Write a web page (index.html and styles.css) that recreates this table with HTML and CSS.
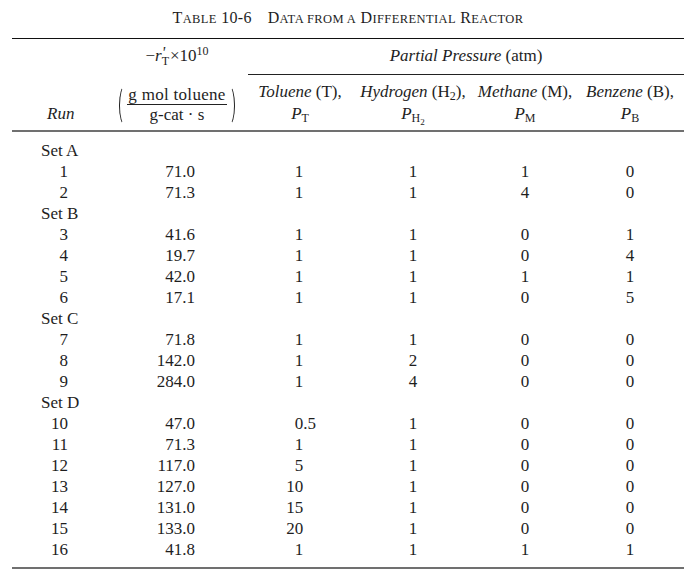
FILE: index.html
```html
<!DOCTYPE html>
<html>
<head>
<meta charset="utf-8">
<link rel="stylesheet" href="styles.css">
</head>
<body>
<div class="page">
  <h1 class="title"><span>T<span class="sc">able</span> 10-6</span><span class="title-main">D<span class="sc">ata from a</span> D<span class="sc">ifferential</span> R<span class="sc">eactor</span></span></h1>
  <table class="data">
    <colgroup>
      <col class="c-run"><col class="c-rate"><col class="c-tol"><col class="c-hyd"><col class="c-met"><col class="c-ben">
    </colgroup>
    <thead>
      <tr class="h1">
        <th></th>
        <th class="rate-head">−<i>r</i><span class="ps"><i class="prime">'</i><span class="pss">T</span></span>×10<sup class="sp">10</sup></th>
        <th colspan="4" class="pp"><div class="pp-inner"><i>Partial Pressure</i> (atm)</div></th>
      </tr>
      <tr class="h2">
        <th class="run-head"><i>Run</i></th>
        <th class="frac-head">
          <span class="fracwrap">
            <span class="paren left"></span>
            <span class="frac"><span class="num">g mol toluene</span><span class="den">g-cat · s</span></span>
            <span class="paren right"></span>
          </span>
        </th>
        <th><i>Toluene</i> (T),<br><i>P</i><sub class="sb">T</sub></th>
        <th><i>Hydrogen</i> (H<sub class="sb">2</sub>),<br><i>P</i><sub class="sb">H<sub class="sb2">2</sub></sub></th>
        <th><i>Methane</i> (M),<br><i>P</i><sub class="sb">M</sub></th>
        <th><i>Benzene</i> (B),<br><i>P</i><sub class="sb">B</sub></th>
      </tr>
    </thead>
    <tbody>
      <tr class="first"><td class="set" colspan="6">Set A</td></tr>
      <tr><td class="run">1</td><td class="rate">71.0</td><td class="tol">1<span class="ph">.5</span></td><td>1</td><td>1</td><td>0</td></tr>
      <tr><td class="run">2</td><td class="rate">71.3</td><td class="tol">1<span class="ph">.5</span></td><td>1</td><td>4</td><td>0</td></tr>
      <tr><td class="set" colspan="6">Set B</td></tr>
      <tr><td class="run">3</td><td class="rate">41.6</td><td class="tol">1<span class="ph">.5</span></td><td>1</td><td>0</td><td>1</td></tr>
      <tr><td class="run">4</td><td class="rate">19.7</td><td class="tol">1<span class="ph">.5</span></td><td>1</td><td>0</td><td>4</td></tr>
      <tr><td class="run">5</td><td class="rate">42.0</td><td class="tol">1<span class="ph">.5</span></td><td>1</td><td>1</td><td>1</td></tr>
      <tr><td class="run">6</td><td class="rate">17.1</td><td class="tol">1<span class="ph">.5</span></td><td>1</td><td>0</td><td>5</td></tr>
      <tr><td class="set" colspan="6">Set C</td></tr>
      <tr><td class="run">7</td><td class="rate">71.8</td><td class="tol">1<span class="ph">.5</span></td><td>1</td><td>0</td><td>0</td></tr>
      <tr><td class="run">8</td><td class="rate">142.0</td><td class="tol">1<span class="ph">.5</span></td><td>2</td><td>0</td><td>0</td></tr>
      <tr><td class="run">9</td><td class="rate">284.0</td><td class="tol">1<span class="ph">.5</span></td><td>4</td><td>0</td><td>0</td></tr>
      <tr><td class="set" colspan="6">Set D</td></tr>
      <tr><td class="run">10</td><td class="rate">47.0</td><td class="tol">0.5</td><td>1</td><td>0</td><td>0</td></tr>
      <tr><td class="run">11</td><td class="rate">71.3</td><td class="tol">1<span class="ph">.5</span></td><td>1</td><td>0</td><td>0</td></tr>
      <tr><td class="run">12</td><td class="rate">117.0</td><td class="tol">5<span class="ph">.5</span></td><td>1</td><td>0</td><td>0</td></tr>
      <tr><td class="run">13</td><td class="rate">127.0</td><td class="tol">10<span class="ph">.5</span></td><td>1</td><td>0</td><td>0</td></tr>
      <tr><td class="run">14</td><td class="rate">131.0</td><td class="tol">15<span class="ph">.5</span></td><td>1</td><td>0</td><td>0</td></tr>
      <tr><td class="run">15</td><td class="rate">133.0</td><td class="tol">20<span class="ph">.5</span></td><td>1</td><td>0</td><td>0</td></tr>
      <tr class="last"><td class="run">16</td><td class="rate">41.8</td><td class="tol">1<span class="ph">.5</span></td><td>1</td><td>1</td><td>1</td></tr>
    </tbody>
  </table>
</div>
</body>
</html>
```

FILE: styles.css
```css
html, body {
  margin: 0;
  padding: 0;
  background: #ffffff;
}

body {
  font-family: "Liberation Serif", "Times New Roman", serif;
  color: #1e1e1e;
  font-size: 17px;
}

.page {
  padding: 8px 0 0 12px;
  width: 672px;
}

.title {
  margin: 0 0 9px 0;
  font-size: 16px;
  font-weight: normal;
  line-height: 20px;
  text-align: center;
  letter-spacing: 0.3px;
}

.title .sc {
  font-size: 12.5px;
  text-transform: uppercase;
  letter-spacing: 0.4px;
}

.title-main {
  margin-left: 16px;
}

.data {
  width: 672px;
  table-layout: fixed;
  border-collapse: separate;
  border-spacing: 0;
  border-top: 1.5px solid #111;
  border-bottom: 2px solid #707070;
}

.c-run { width: 102px; }
.c-rate { width: 134px; }
.c-tol { width: 104px; }
.c-hyd { width: 122px; }
.c-met { width: 102px; }
.c-ben { width: 108px; }

th {
  font-weight: normal;
  padding: 0;
  text-align: center;
  line-height: 22px;
}

.h1 th {
  padding: 0;
  vertical-align: top;
}

.h1 th.rate-head {
  padding-top: 6px;
  padding-right: 8px;
  white-space: nowrap;
}

.h1 th.pp {
  padding: 0;
  vertical-align: bottom;
}

.pp-inner {
  border-bottom: 1px solid #222;
  padding: 6px 0 7px;
  line-height: 22px;
}

.ps {
  display: inline-block;
  vertical-align: -4px;
  line-height: 10px;
  text-align: left;
  margin-right: 1px;
}

.ps .prime {
  display: block;
  height: 10px;
  font-size: 16px;
  line-height: 14px;
}

.ps .pss {
  display: block;
  font-size: 12px;
  line-height: 10px;
}

.sp {
  font-size: 12px;
  vertical-align: 6px;
  line-height: 0;
}

.h2 th {
  vertical-align: bottom;
  padding-top: 6px;
  padding-bottom: 5px;
  border-bottom: 2px solid #707070;
  white-space: nowrap;
}

.h2 th.run-head {
  text-align: left;
  padding-left: 35px;
}

.h2 th.frac-head {
  padding-right: 8px;
  padding-bottom: 5px;
}

.fracwrap {
  display: inline-flex;
  align-items: center;
  vertical-align: bottom;
}

.paren {
  display: block;
  width: 11px;
  height: 39px;
  border-radius: 50%;
  border: 1.3px solid transparent;
  box-sizing: border-box;
}

.paren.left {
  border-left-color: #222;
  margin-right: -3px;
}

.paren.right {
  border-right-color: #222;
  margin-left: -3px;
}

.frac {
  display: flex;
  flex-direction: column;
  align-items: stretch;
  text-align: center;
}

.num {
  line-height: 19px;
  border-bottom: 1px solid #222;
  padding: 0 1px;
  letter-spacing: 0.3px;
}

.den {
  line-height: 20px;
}

sub.sb {
  font-size: 12px;
  vertical-align: -3px;
  line-height: 0;
}

sub.sb2 {
  font-size: 9px;
  vertical-align: -3px;
  line-height: 0;
}

td {
  padding: 0;
  line-height: 21px;
  height: 21px;
  text-align: center;
  white-space: nowrap;
}

tr.first td {
  padding-top: 8px;
}

tr.last td {
  padding-bottom: 7px;
}

td.set {
  text-align: left;
  padding-left: 29px;
}

td.run {
  text-align: right;
  padding-right: 46px;
}

td.rate {
  text-align: right;
  padding-right: 53px;
}

td.tol {
  text-align: right;
  padding-right: 36px;
}

.ph {
  visibility: hidden;
}
```
